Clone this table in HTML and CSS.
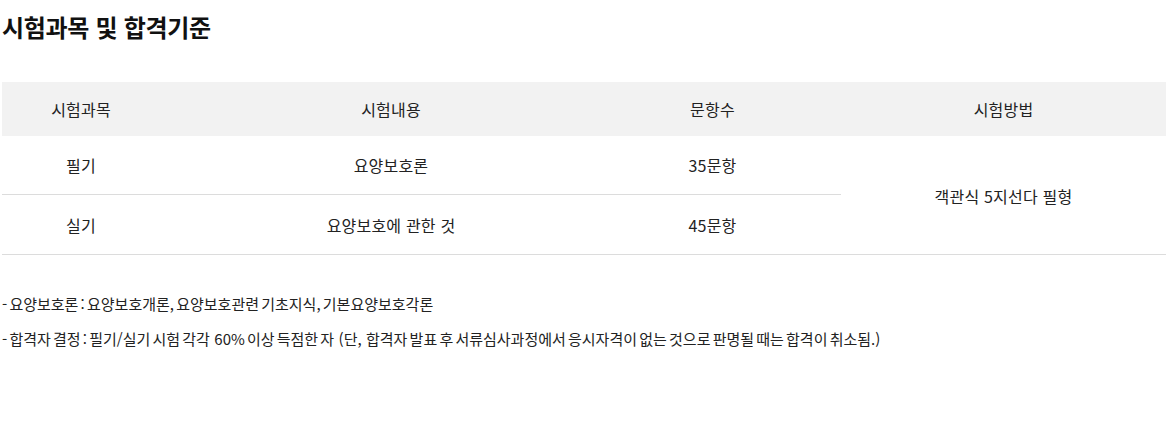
FILE: index.html
```html
<!DOCTYPE html>
<html lang="ko">
<head>
<meta charset="utf-8">
<link rel="stylesheet" href="styles.css">
</head>
<body>
<div class="page">
  <h2 class="title">시험과목 및 합격기준</h2>
  <table class="exam">
    <colgroup>
      <col class="c1"><col class="c2"><col class="c3"><col class="c4">
    </colgroup>
    <thead>
      <tr>
        <th>시험과목</th>
        <th>시험내용</th>
        <th class="num">문항수</th>
        <th>시험방법</th>
      </tr>
    </thead>
    <tbody>
      <tr class="r1">
        <td>필기</td>
        <td>요양보호론</td>
        <td class="num">35문항</td>
        <td rowspan="2" class="method">객관식 5지선다 필형</td>
      </tr>
      <tr class="r2">
        <td>실기</td>
        <td>요양보호에 관한 것</td>
        <td class="num">45문항</td>
      </tr>
    </tbody>
  </table>
  <ul class="notes">
    <li>- 요양보호론 : 요양보호개론, 요양보호관련 기초지식, 기본요양보호각론</li>
    <li>- 합격자 결정 : 필기/실기 시험 각각&nbsp; 60% 이상 득점한 자&nbsp; (단,&nbsp; 합격자 발표 후 서류심사과정에서 응시자격이 없는 것으로 판명될 때는 합격이 취소됨.)</li>
  </ul>
</div>
</body>
</html>
```
FILE: styles.css
```css
html, body {
  margin: 0;
  padding: 0;
  background: #fff;
}
body {
  font-family: "Noto Sans CJK KR", "Noto Sans", sans-serif;
  color: #222;
}
.page {
  padding: 0 4px 0 2px;
}
.title {
  margin: 0;
  padding-top: 11px;
  font-size: 24px;
  font-weight: 700;
  letter-spacing: -0.3px;
  line-height: 32px;
  color: #111;
}
.exam {
  margin-top: 39px;
  width: 1164px;
  border-collapse: collapse;
  table-layout: fixed;
  font-size: 16px;
  letter-spacing: 0.2px;
}
.c1 { width: 158px; }
.c2 { width: 462px; }
.c3 { width: 219px; }
.c4 { width: 325px; }
.exam th {
  background: #f2f2f2;
  height: 54px;
  padding: 0;
  font-weight: 400;
  text-align: center;
}
.exam td {
  padding: 0;
  text-align: center;
  border-bottom: 1px solid #dcdcdc;
}
.exam .num {
  padding-right: 38px;
}
.r1 td { height: 58px; }
.r2 td { height: 59px; }
.exam td.method {
  padding-top: 2px;
}
.notes {
  list-style: none;
  margin: 39px 0 0;
  padding: 0;
  font-size: 15px;
  letter-spacing: 0;
  word-spacing: -2px;
}
.notes li {
  line-height: 20px;
  margin-bottom: 15px;
}
```
